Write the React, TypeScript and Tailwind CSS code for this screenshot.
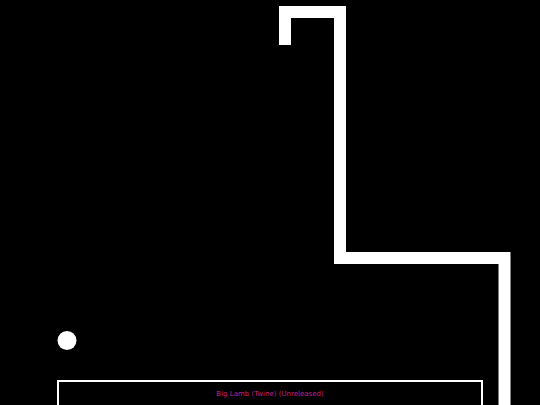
export default function App() {
  return (
    <div className="relative w-[540px] h-[405px] overflow-hidden bg-black">
      {/* track line and marker drawn on the canvas */}
      <svg
        className="absolute left-0 top-0"
        width={540}
        height={405}
        viewBox="0 0 540 405"
      >
        <polyline
          points="285,45 285,12 340,12 340,258 504.5,258 504.5,420"
          fill="none"
          stroke="#ffffff"
          strokeWidth={12}
          strokeLinejoin="miter"
          strokeLinecap="butt"
        />
        <circle cx={67} cy={340.5} r={9.5} fill="#ffffff" />
      </svg>
      <div className="relative pt-[380px] pl-[57px]">
        <div
          className="w-[426px] h-[40px] border-2 border-white bg-black pt-[7px] text-center text-[7px] leading-[10px] text-[#c8208a]"
          style={{ fontFamily: '"DejaVu Sans", Verdana, sans-serif' }}
        >
          Big Lamb (Twine) (Unreleased)
        </div>
      </div>
    </div>
  );
}
